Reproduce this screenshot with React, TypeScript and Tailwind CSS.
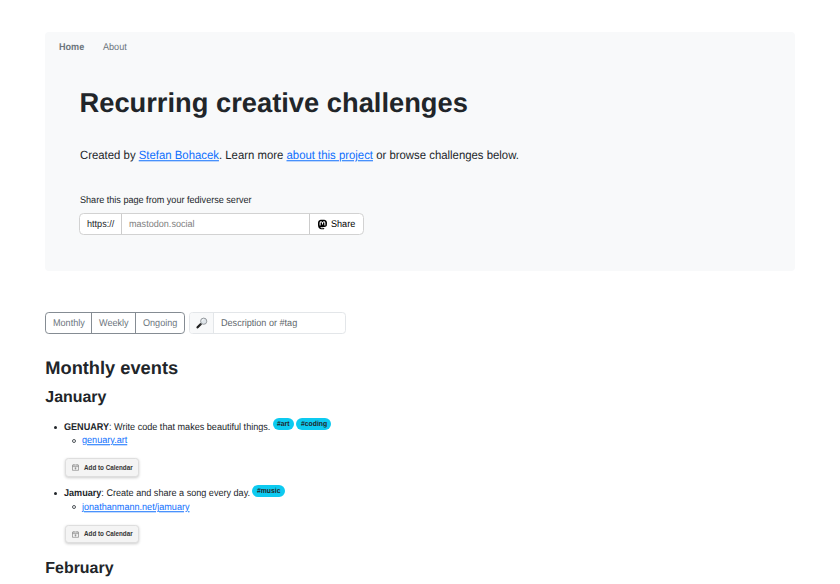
import type { ReactNode } from "react";
import { FaMastodon } from "react-icons/fa6";

function Label({ children }: { children: ReactNode }) {
  return <span className="inline-block scale-y-[1.08] rotate-[0.01deg]">{children}</span>;
}

function Magnifier() {
  return (
    <svg viewBox="0 0 12 12" className="h-[12px] w-[12px]">
      <path d="M4.6 7.2 L1.6 10.3" stroke="#222" strokeWidth="2.3" strokeLinecap="round" />
      <path d="M5.9 6.1 L4.6 7.4" stroke="#555" strokeWidth="1.2" />
      <circle cx="7.7" cy="4.2" r="3.1" fill="#dfe5ea" stroke="#8d9296" strokeWidth="0.9" />
      <path d="M6 4.2 A1.8 1.8 0 0 1 7.8 2.4" fill="none" stroke="#fff" strokeWidth="0.7" />
    </svg>
  );
}

function CalendarIcon() {
  return (
    <svg viewBox="0 0 7 7" className="h-[7px] w-[7px]" fill="none" stroke="#777" strokeWidth="0.6">
      <path d="M0.5 1H6.5V6.3H0.5ZM0.5 2.6H6.5M1.9 0.1V1.6M5.1 0.1V1.6M3.5 3.4V5.5M2.5 4.2H4.5" />
    </svg>
  );
}

function Event({ name, text, tags, link }: { name: string; text: string; tags: string[]; link: string }) {
  return (
    <li className="h-[66.6px]">
      <div className="flex h-[13.6px] items-center">
        <span className="ml-[9px] mr-[6.4px] h-[3px] w-[3px] rounded-full bg-[#212529]" />
        <span className="pt-px">
          <Label>
            <b>{name}</b>: {text}
          </Label>
        </span>
        <span className="mb-[6px] ml-[2.7px] flex gap-[2.3px]">
          {tags.map((tag) => (
            <span key={tag} className="h-[11.8px] rounded-full bg-[#0dcaf0] px-[4.4px] text-[6.82px] leading-[13.6px] font-bold">
              <Label>{tag}</Label>
            </span>
          ))}
        </span>
      </div>
      <div className="flex h-[13.6px] items-center">
        <span className="ml-[26.6px] mr-[6.2px] h-[4px] w-[4px] rounded-full border-[0.6px] border-[#50565b]" />
        <Label>
          <a className="text-[#0d6efd] underline">{link}</a>
        </Label>
      </div>
      <button className="mt-[10.8px] ml-[19.8px] flex h-[18.4px] w-[74px] items-center rounded-[3.4px] border border-[#dedede] bg-[#f4f4f4] pl-[6px] text-[6.3px] font-bold text-[#333] shadow-[0_1px_3px_rgba(0,0,0,0.2)]">
        <CalendarIcon />
        <span className="ml-[4.5px]">
          <Label>Add to Calendar</Label>
        </span>
      </button>
    </li>
  );
}

export default function App() {
  return (
    <div className="h-[584px] overflow-hidden bg-white pl-[45.3px] pt-[32px] font-['Liberation_Sans',Arial,sans-serif] text-[9.09px] leading-[13.64px] whitespace-nowrap text-[#212529] [text-rendering:geometricPrecision]">
      <header className="h-[239px] w-[750.1px] rounded-[4px] bg-[#f8f9fa]">
        <nav className="flex h-[30px] items-center gap-[18.4px] pl-[14px] pt-[2.4px] text-[#6c757d]">
          <Label>
            <a className="font-bold">Home</a>
          </Label>
          <Label>
            <a>About</a>
          </Label>
        </nav>
        <div className="pl-[34.2px]">
          <h1 className="mt-[24px] text-[27.3px] leading-[33px] font-bold">Recurring creative challenges</h1>
          <p className="mt-[28.8px] pl-[0.5px] text-[11.37px] leading-[17px]">
            <span className="inline-block scale-y-[1.05] rotate-[0.01deg]">
              Created by <a className="text-[#0d6efd] underline">Stefan Bohacek</a>. Learn more{" "}
              <a className="text-[#0d6efd] underline">about this project</a> or browse challenges below.
            </span>
          </p>
          <p className="mt-[29.2px] pl-[0.5px]">
            <Label>Share this page from your fediverse server</Label>
          </p>
          <div className="mt-[5.6px] flex h-[22px] w-[284.6px] items-stretch overflow-hidden rounded-[4.5px] border border-[#d2d2d2] bg-white leading-[20px]">
            <span className="w-[42px] border-r border-[#ccc] pl-[6.6px]">
              <Label>https://</Label>
            </span>
            <span className="w-[188px] border-r border-[#ccc] pl-[6.2px] text-[#808080]">
              <Label>mastodon.social</Label>
            </span>
            <span className="flex flex-1 items-center pl-[6.6px] text-black">
              <FaMastodon className="mr-[3px] h-[11px] w-[11px]" />
              <Label>Share</Label>
            </span>
          </div>
        </div>
      </header>
      <div className="mt-[41px] flex h-[22px] gap-[4.1px] leading-[20px]">
        <div className="flex w-[140px] overflow-hidden rounded-[3.8px] border border-[#858c93] text-[#6c757d]">
          <span className="w-[46px] border-r border-[#858c93] pl-[6.6px]">
            <Label>Monthly</Label>
          </span>
          <span className="w-[44px] border-r border-[#858c93] pl-[6.6px]">
            <Label>Weekly</Label>
          </span>
          <span className="pl-[6.4px]">
            <Label>Ongoing</Label>
          </span>
        </div>
        <div className="flex w-[157px] overflow-hidden rounded-[3.6px] border border-[#e3e6e9]">
          <span className="flex w-[24px] items-center justify-center border-r border-[#e3e6e9] bg-[#f8f9fa]">
            <Magnifier />
          </span>
          <span className="pl-[7px] text-[#60666b]">
            <Label>Description or #tag</Label>
          </span>
        </div>
      </div>
      <h2 className="mt-[23px] text-[18.25px] leading-[22px] font-bold">Monthly events</h2>
      <h3 className="mt-[8.6px] text-[15.95px] leading-[19px] font-bold">January</h3>
      <ul className="mt-[13.8px]">
        <Event name="GENUARY" text="Write code that makes beautiful things." tags={["#art", "#coding"]} link="genuary.art" />
        <Event name="Jamuary" text="Create and share a song every day." tags={["#music"]} link="jonathanmann.net/jamuary" />
      </ul>
      <h3 className="mt-[5px] text-[15.95px] leading-[19px] font-bold">February</h3>
    </div>
  );
}
